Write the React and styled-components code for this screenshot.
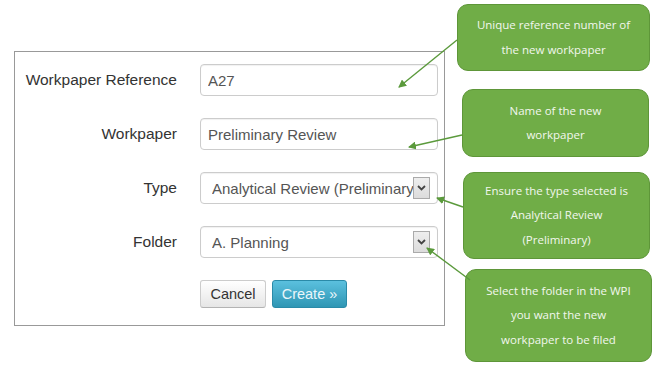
import React from "react";
import styled, { createGlobalStyle } from "styled-components";

const Global = createGlobalStyle`
  body {
    margin: 0;
    background: #fff;
    font-family: "Liberation Sans", Arial, sans-serif;
  }
`;

const Page = styled.div`
  position: relative;
  width: 656px;
  height: 372px;
  display: flex;
  align-items: flex-start;
`;

const Panel = styled.form`
  margin: 51px 0 0 14px;
  width: 431px;
  height: 275px;
  box-sizing: border-box;
  border: 1px solid #999;
  padding: 12px 0 0 0;
  display: grid;
  grid-template-columns: 162px 238px;
  grid-auto-rows: 31px;
  column-gap: 23px;
  row-gap: 23px;
  align-content: start;
`;

const Label = styled.label`
  justify-self: end;
  align-self: center;
  font-size: 15.5px;
  color: #333;
  padding-top: 1px;
`;

const Field = styled.div`
  box-sizing: border-box;
  height: 32px;
  border: 1px solid #ccc;
  border-radius: 4px;
  box-shadow: inset 0 1px 1px rgba(0, 0, 0, 0.06);
  display: flex;
  align-items: center;
  padding: 0 7px 0 ${(p) => p.$pad || 7}px;
  font-size: 15px;
  color: #555;
  overflow: hidden;
`;

const FieldText = styled.span`
  flex: 1;
  white-space: nowrap;
  overflow: hidden;
`;

const Arrow = styled.span`
  flex: none;
  width: 17px;
  height: 22px;
  box-sizing: border-box;
  border: 1px solid #aaa;
  background: linear-gradient(#eee, #dcdcdc);
  display: flex;
  align-items: center;
  justify-content: center;
`;

const Buttons = styled.div`
  display: flex;
  gap: 6px;
  height: 28px;
`;

const Button = styled.button`
  height: 28px;
  border-radius: 3px;
  font-family: "Liberation Sans", Arial, sans-serif;
  font-size: 14.5px;
  white-space: nowrap;
  padding: 0;
  cursor: pointer;
  ${(p) =>
    p.$primary
      ? `
    color: #eaf6fa;
    background: linear-gradient(#5bc0de, #2f96b4);
    border: 1px solid #2a8aa8;
    width: 75px;
  `
      : `
    color: #333;
    background: linear-gradient(#fff, #e6e6e6);
    border: 1px solid #ccc;
    border-bottom-color: #b3b3b3;
    width: 66px;
  `}
`;

const Notes = styled.div`
  display: flex;
  flex-direction: column;
  padding-top: 4px;
  margin-left: 12px;
`;

const Note = styled.div`
  box-sizing: border-box;
  width: ${(p) => p.$w}px;
  height: ${(p) => p.$h}px;
  margin-left: ${(p) => p.$x}px;
  margin-top: ${(p) => p.$gap}px;
  background: #70ad47;
  border: 1px solid #5e9639;
  border-radius: 11px;
  display: flex;
  flex-direction: column;
  justify-content: center;
  align-items: center;
  color: #f2f7ee;
  font-family: "Open Sans", sans-serif;
  font-size: 11.5px;
  line-height: 24.5px;
  text-align: center;
`;

const Overlay = styled.svg`
  position: absolute;
  left: 0;
  top: 0;
  pointer-events: none;
`;

const Chevron = () => (
  <svg width="9" height="6" viewBox="0 0 9 6">
    <path d="M1 1 L4.5 4.5 L8 1" fill="none" stroke="#444" strokeWidth="1.8" />
  </svg>
);

const arrows = [
  [457, 40, 399, 87],
  [462, 135, 409, 147],
  [463, 207, 437, 198],
  [470, 280, 427, 248],
];

const notes = [
  { x: 0, w: 193, h: 67, gap: 0, lines: ["Unique reference number of", "the new workpaper"] },
  { x: 5, w: 187, h: 68, gap: 18, lines: ["Name of the new", "workpaper"] },
  { x: 6, w: 187, h: 87, gap: 15, lines: ["Ensure the type selected is", "Analytical Review", "(Preliminary)"] },
  { x: 8, w: 187, h: 93, gap: 10, lines: ["Select the folder in the WPI", "you want the new", "workpaper to be filed"] },
];

export default function App() {
  return (
    <Page>
      <Global />
      <Panel>
        <Label>Workpaper Reference</Label>
        <Field><FieldText>A27</FieldText></Field>
        <Label>Workpaper</Label>
        <Field><FieldText>Preliminary Review</FieldText></Field>
        <Label>Type</Label>
        <Field $pad={11}>
          <FieldText>Analytical Review (Preliminary)</FieldText>
          <Arrow><Chevron /></Arrow>
        </Field>
        <Label>Folder</Label>
        <Field $pad={11}>
          <FieldText>A. Planning</FieldText>
          <Arrow><Chevron /></Arrow>
        </Field>
        <span />
        <Buttons>
          <Button type="button">Cancel</Button>
          <Button type="button" $primary>Create »</Button>
        </Buttons>
      </Panel>
      <Notes>
        {notes.map((n, i) => (
          <Note key={i} $x={n.x} $w={n.w} $h={n.h} $gap={n.gap}>
            {n.lines.map((l) => (
              <div key={l}>{l}</div>
            ))}
          </Note>
        ))}
      </Notes>
      <Overlay width="656" height="372">
        <defs>
          <marker id="head" markerWidth="8" markerHeight="8" refX="7" refY="4" orient="auto" markerUnits="userSpaceOnUse">
            <path d="M0 0 L8 4 L0 8 Z" fill="#5b9a3c" />
          </marker>
        </defs>
        {arrows.map(([x1, y1, x2, y2], i) => (
          <line key={i} x1={x1} y1={y1} x2={x2} y2={y2} stroke="#5b9a3c" strokeWidth="1.4" markerEnd="url(#head)" />
        ))}
      </Overlay>
    </Page>
  );
}
